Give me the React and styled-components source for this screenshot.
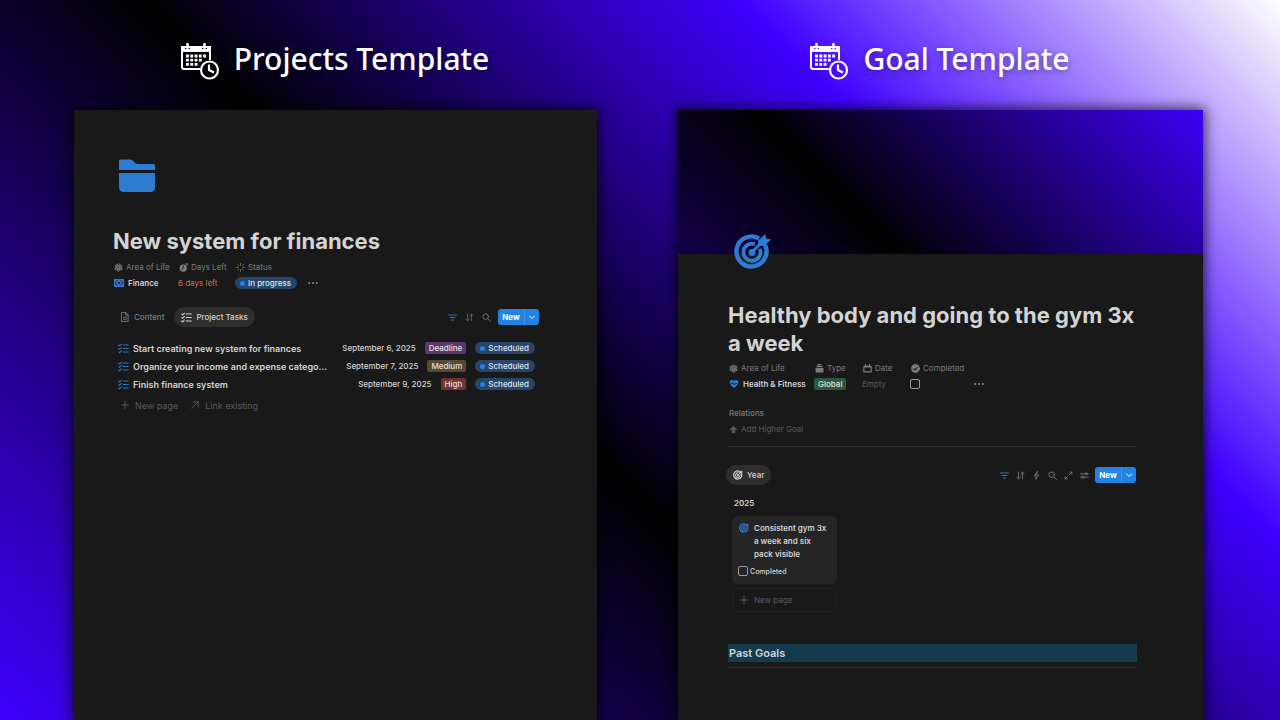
import React from 'react'
import styled, { createGlobalStyle } from 'styled-components'

const GlobalStyle = createGlobalStyle`
  * {
    box-sizing: border-box;
  }
  body {
    margin: 0;
    font-family: Inter, 'Liberation Sans', sans-serif;
    color: #d4d4d4;
  }
  h1, h2, h3, p, ul {
    margin: 0;
    padding: 0;
  }
  svg {
    display: block;
    flex: none;
  }
  button {
    border: 0;
    padding: 0;
    background: none;
    font: inherit;
    color: inherit;
    cursor: pointer;
  }
`

const Page = styled.main`
  min-height: 100vh;
  display: grid;
  grid-template-columns: 523fr 525fr;
  gap: 81px;
  padding: 0 77px 0 74px;
  background: linear-gradient(45deg, #4000ff 0%, #000 43%, #4000ff 73%, #fff 100%);
`

const Column = styled.section`
  min-width: 0;
  display: flex;
  flex-direction: column;
`

const Heading = styled.header`
  height: 110px;
  padding: 12px 2px 0 0;
  display: flex;
  align-items: center;
  justify-content: center;
  gap: 14px;
  color: #fff;
  h1 {
    font-family: 'Noto Sans', sans-serif;
    font-weight: 500;
    font-size: 30px;
    line-height: 40px;
    padding-bottom: 4px;
    white-space: nowrap;
    text-shadow: 0 2px 6px rgba(0, 0, 0, 0.4);
  }
`

const Panel = styled.article`
  flex: 1;
  background: #191919;
  box-shadow: 0 0 12px 2px rgba(0, 0, 0, 0.7);
`

const Cover = styled.div`
  height: 144px;
  background: linear-gradient(45deg, #14004a 0%, #000 33%, #3d00f5 100%);
`

const ProjectBody = styled.div`
  padding: 48px 57px 24px 39px;
`

const GoalBody = styled.div`
  padding: 0 66px 24px 50px;
`

const PageIcon = styled.div`
  padding-left: 6px;
  height: ${(props) => (props.$overlap ? '68px' : '69px')};
  margin-top: ${(props) => (props.$overlap ? '-21px' : '0')};
`

const Title = styled.h2`
  font-size: 22px;
  font-weight: 700;
  line-height: 28px;
`

const Properties = styled.div`
  display: grid;
  grid-template-columns: ${(props) => props.$columns};
  margin-top: ${(props) => props.$top};
`

const Label = styled.div`
  height: 16px;
  display: flex;
  align-items: center;
  gap: 3px;
  padding-left: 1px;
  font-size: 8px;
  color: #7d7d7d;
  white-space: nowrap;
`

const Value = styled.div`
  height: 16px;
  display: flex;
  align-items: center;
  gap: 4px;
  padding-left: ${(props) => (props.$strong ? '1px' : '0')};
  font-size: 8px;
  font-weight: ${(props) => (props.$strong ? 600 : 400)};
  color: ${(props) => props.$color || '#d4d4d4'};
  white-space: nowrap;
`

const MoreButton = styled.button`
  align-self: end;
  height: 16px;
  color: #9b9b9b;
`

const Pill = styled.span`
  height: 12px;
  padding: 0 6px 0 5px;
  border-radius: 6px;
  display: inline-flex;
  align-items: center;
  gap: 3px;
  background: #28456c;
  color: #dbe6f2;
  font-size: 8px;
  font-weight: 500;
  line-height: 12px;
  &::before {
    content: '';
    width: 5px;
    height: 5px;
    border-radius: 50%;
    background: #2383e2;
  }
`

const Tag = styled.span`
  padding: 0 4px;
  border-radius: 2px;
  background: ${(props) => props.$color};
  color: #e6e0dc;
  font-size: 8px;
  font-weight: 500;
  line-height: 12px;
`

const TabBar = styled.div`
  display: flex;
  align-items: center;
  gap: 3px;
  margin: ${(props) => props.$margin};
`

const Tab = styled.button`
  height: 20px;
  padding: 0 7px;
  border-radius: 10px;
  display: flex;
  align-items: center;
  gap: 4px;
  font-size: 8px;
  font-weight: 500;
  color: ${(props) => (props.$active ? '#d4d4d4' : '#7d7d7d')};
  background: ${(props) => (props.$active ? '#2f2e2c' : 'transparent')};
`

const Tools = styled.div`
  margin-left: auto;
  display: flex;
  align-items: center;
  gap: ${(props) => props.$gap};
`

const ToolButton = styled.button`
  width: 10px;
  display: flex;
  justify-content: center;
  color: ${(props) => (props.$active ? '#2777cb' : '#7d7d7d')};
`

const NewButton = styled.div`
  display: flex;
  height: 16px;
  border-radius: 3px;
  background: #2383e2;
  color: #fff;
  button {
    display: flex;
    align-items: center;
    justify-content: center;
    width: 14px;
  }
  button:first-child {
    width: 27px;
    font-size: 8px;
    font-weight: 700;
    border-right: 1px solid #3f93e6;
  }
`

const TaskList = styled.ul`
  list-style: none;
  margin: 12px 5px 0 5px;
`

const Task = styled.li`
  height: 18px;
  display: flex;
  align-items: center;
  gap: 9px;
  font-size: 8px;
  font-weight: 500;
  white-space: nowrap;
`

const TaskName = styled.span`
  flex: 1;
  display: flex;
  align-items: center;
  gap: 5px;
  font-size: 9px;
  font-weight: 600;
  min-width: 0;
`

const Links = styled.div`
  display: flex;
  gap: 12px;
  padding-left: 7px;
  margin-top: 4px;
`

const GhostButton = styled.button`
  height: 16px;
  display: flex;
  align-items: center;
  gap: ${(props) => (props.$small ? '3px' : '5px')};
  font-size: ${(props) => (props.$small ? '8px' : '9px')};
  color: #5a5a5a;
`

const Checkbox = styled.input`
  appearance: none;
  width: 10px;
  height: 10px;
  margin: 0;
  border: 1px solid #9b9b9b;
  border-radius: 2px;
`

const Relations = styled.section`
  margin-top: 13px;
  padding: 0 0 9px 1px;
  h3 {
    font-size: 8px;
    font-weight: 500;
    line-height: 16px;
    color: #7d7d7d;
  }
`

const Divider = styled.hr`
  margin: 0;
  border: 0;
  height: 1px;
  background: #2f2f2f;
`

const Board = styled.div`
  width: 109px;
  padding-left: 4px;
  margin-top: 10px;
  h3 {
    padding-left: 2px;
    font-size: 8px;
    font-weight: 600;
    line-height: 16px;
  }
`

const Card = styled.div`
  height: 68px;
  margin: 5px 0 4px;
  padding: 6px 6px 0;
  border-radius: 6px;
  background: #252525;
`

const CardTitle = styled.p`
  display: flex;
  gap: 5px;
  font-size: 8px;
  font-weight: 600;
  line-height: 13px;
  svg {
    margin: 1px 0 0 1px;
  }
`

const CardCheck = styled.label`
  height: 10px;
  margin-top: 5px;
  display: flex;
  align-items: center;
  gap: 2px;
  font-size: 7px;
  font-weight: 500;
`

const AddCard = styled.button`
  width: 100%;
  height: 24px;
  padding-left: 6px;
  border: 1px solid #222;
  border-radius: 6px;
  display: flex;
  align-items: center;
  gap: 5px;
  font-size: 8px;
  color: #5a5a5a;
`

const PastGoals = styled.h3`
  margin: 32px 0 5px;
  padding-left: 1px;
  font-size: 11px;
  font-weight: 600;
  line-height: 18px;
  background: #143a4e;
`

const Icon = ({ size = 10, box = 16, children, ...rest }) => (
  <svg
    width={size}
    height={size}
    viewBox={`0 0 ${box} ${box}`}
    fill="none"
    stroke="currentColor"
    strokeWidth="1.5"
    strokeLinecap="round"
    strokeLinejoin="round"
    aria-hidden="true"
    {...rest}
  >
    {children}
  </svg>
)

const CalendarClock = () => (
  <svg width="40" height="38" viewBox="0 0 40 38" fill="none" stroke="#fff" aria-hidden="true">
    <path d="M20 27H4a2 2 0 0 1-2-2V5h28v13" strokeWidth="2" />
    <path d="M1 4h4v3h5V4h12v3h5V4h4v6H1z" fill="#fff" stroke="none" />
    <path d="M7.500 2v4M24.500 2v4" strokeWidth="2.500" strokeLinecap="round" />
    <path d="M6 14h21M6 18.200h16.500M6 22.400h13" strokeWidth="2.800" strokeDasharray="2.900 1.400" />
    <circle cx="29.500" cy="28" r="8.500" strokeWidth="2.200" />
    <path d="M29 22.500V28l5 2.500" strokeWidth="2.200" />
  </svg>
)

const FolderIcon = () => (
  <svg width="36" height="35" viewBox="0 0 36 35" fill="#2e7cd1" aria-hidden="true">
    <path d="M0 12V3q0-1.500 1.500-1.500H11c4 0 4 4.500 8 4.500h15.500q1.500 0 1.500 1.500V12z" />
    <path d="M0 15h36v14q0 5-5 5H5q-5 0-5-5z" />
  </svg>
)

const TargetIcon = ({ size = 10, color = 'currentColor' }) => (
  <svg width={size} height={size} viewBox="0 0 37 37" fill="none" stroke={color} aria-hidden="true">
    <path d="M25 5.500A15 15 0 1 0 31 12" strokeWidth="4.400" />
    <path d="M21 11.300A8.500 8.500 0 1 0 25.800 16" strokeWidth="3.800" />
    <path d="M18 19l10-10" strokeWidth="2.800" />
    <circle cx="18" cy="19.500" r="3.600" fill={color} stroke="none" />
    <path d="M24 13V7.500L31.500 1l.5 4.500 5 1L30.500 13z" fill={color} stroke="none" />
  </svg>
)

const AtomIcon = () => (
  <Icon size={9}>
    <circle cx="8" cy="8" r="1.500" />
    <ellipse cx="8" cy="8" rx="7" ry="3" transform="rotate(30 8 8)" />
    <ellipse cx="8" cy="8" rx="7" ry="3" transform="rotate(90 8 8)" />
    <ellipse cx="8" cy="8" rx="7" ry="3" transform="rotate(150 8 8)" />
  </Icon>
)

const DaysIcon = () => (
  <Icon size={9}>
    <circle cx="7.500" cy="9" r="6.500" fill="currentColor" stroke="none" />
    <path d="M7.500 5.500V9.500L5.500 11" stroke="#191919" />
    <path d="M12 4l2.500-2.500M12 1.500h2.500V4" />
  </Icon>
)

const StatusIcon = () => (
  <Icon size={9}>
    <path d="M8 1v3M8 12v3M1 8h3M12 8h3M3 3l2 2M11 11l2 2M3 13l2-2M11 5l2-2" />
  </Icon>
)

const BanknoteIcon = () => (
  <svg width="10" height="8" viewBox="0 0 20 16" aria-hidden="true">
    <rect width="20" height="16" rx="1" fill="#2e7cd1" />
    <path d="M7 3Q3 5 3 8t4 5M13 3q4 2 4 5t-4 5" fill="none" stroke="#191919" strokeWidth="1.800" />
    <circle cx="10" cy="8" r="2.500" fill="#191919" />
  </svg>
)

const HeartPulseIcon = () => (
  <svg width="10" height="10" viewBox="0 0 20 20" fill="#2e7cd1" aria-hidden="true">
    <path d="M10 18C4 13 1 10 1 6.500 1 2 7 0 10 4c3-4 9-2 9 2.500C19 10 16 13 10 18z" />
    <path d="M1 10h5l2-3 3 5 2-3h3" fill="none" stroke="#191919" strokeWidth="1.600" />
  </svg>
)

const ChecklistIcon = ({ size = 11 }) => (
  <Icon size={size}>
    <path d="M1 3l1.300 1.300L5 1.500M1 8l1.300 1.300L5 6.500M1 13l1.300 1.300L5 11.500M7.500 3H15M7.500 8H15M7.500 13H15" />
  </Icon>
)

const DocIcon = () => (
  <Icon>
    <path d="M3 1h6l4 4v10H3zM9 1v4h4M5.500 8.500h5M5.500 11.500h5" />
  </Icon>
)

const FilterIcon = () => (
  <Icon size={9}>
    <path d="M1 3.500h14M3.500 8h9M6 12.500h4" strokeWidth="1.800" />
  </Icon>
)

const SortIcon = () => (
  <Icon size={9}>
    <path d="M4.500 2v12M1.500 11l3 3 3-3M11.500 14V2M8.500 5l3-3 3 3" />
  </Icon>
)

const BoltIcon = () => (
  <Icon size={9}>
    <path d="M9.500 1L4 9h3.500L6.500 15 12 7H8.500z" />
  </Icon>
)

const SearchIcon = () => (
  <Icon size={9}>
    <circle cx="6.500" cy="6.500" r="5" />
    <path d="M10.500 10.500L15 15" />
  </Icon>
)

const ExpandIcon = () => (
  <Icon size={9}>
    <path d="M9.500 6.500L14 2M10 2h4v4M6.500 9.500L2 14M6 14H2v-4" />
  </Icon>
)

const SettingsIcon = () => (
  <Icon size={9}>
    <path d="M1 5h8M13 5h2M1 11h2M7 11h8" />
    <circle cx="11" cy="5" r="2" />
    <circle cx="5" cy="11" r="2" />
  </Icon>
)

const PlusIcon = () => (
  <Icon>
    <path d="M8 2.500v11M2.500 8h11" />
  </Icon>
)

const ArrowIcon = () => (
  <Icon>
    <path d="M3 13L13 3M5 3h8v8" />
  </Icon>
)

const ArrowUpIcon = () => (
  <Icon size={9} fill="currentColor" strokeWidth="1">
    <path d="M8 2l6 6h-3.500v6h-5V8H2z" />
  </Icon>
)

const JarIcon = () => (
  <Icon size={9} fill="currentColor" stroke="none">
    <path d="M4.500 0h7v2h-7zM3 3h10v2.500H3zM1 6.500h14V14q0 1-1 1H2q-1 0-1-1z" />
  </Icon>
)

const DateIcon = () => (
  <Icon size={9}>
    <path d="M1.500 4h13v10h-13zM1.500 5h13M4.500 1v3M11.500 1v3" strokeWidth="2" />
  </Icon>
)

const CheckBadgeIcon = () => (
  <Icon size={9}>
    <circle cx="8" cy="8" r="7" fill="currentColor" />
    <path d="M5 8.500l2 2L11.500 6" stroke="#191919" strokeWidth="2" />
  </Icon>
)

const DotsIcon = () => (
  <Icon size={10} fill="currentColor" stroke="none">
    <circle cx="2" cy="8" r="1.500" />
    <circle cx="8" cy="8" r="1.500" />
    <circle cx="14" cy="8" r="1.500" />
  </Icon>
)

const ChevronIcon = () => (
  <Icon size={8}>
    <path d="M3 6l5 5 5-5" strokeWidth="2" />
  </Icon>
)

const tasks = [
  { name: 'Start creating new system for finances', date: 'September 6, 2025', tag: 'Deadline', color: '#583a70' },
  { name: 'Organize your income and expense catego…', date: 'September 7, 2025', tag: 'Medium', color: '#574a2f' },
  { name: 'Finish finance system', date: 'September 9, 2025', tag: 'High', color: '#703331' },
]

const NewMenu = () => (
  <NewButton>
    <button type="button">New</button>
    <button type="button" aria-label="More options">
      <ChevronIcon />
    </button>
  </NewButton>
)

const ProjectTemplate = () => (
  <Column>
    <Heading>
      <CalendarClock />
      <h1>Projects Template</h1>
    </Heading>
    <Panel>
      <ProjectBody>
        <PageIcon>
          <FolderIcon />
        </PageIcon>
        <Title>New system for finances</Title>
        <Properties $columns="65px 57px 73px auto" $top="4px">
          <div>
            <Label><AtomIcon />Area of Life</Label>
            <Value $strong><BanknoteIcon />Finance</Value>
          </div>
          <div>
            <Label><DaysIcon />Days Left</Label>
            <Value $color="#c77440">6 days left</Value>
          </div>
          <div>
            <Label><StatusIcon />Status</Label>
            <Value><Pill>In progress</Pill></Value>
          </div>
          <MoreButton type="button" aria-label="More properties"><DotsIcon /></MoreButton>
        </Properties>
        <TabBar $margin="16px 1px 0 0">
          <Tab type="button"><DocIcon />Content</Tab>
          <Tab type="button" $active><ChecklistIcon />Project Tasks</Tab>
          <Tools $gap="7px">
            <ToolButton type="button" aria-label="Filter" $active><FilterIcon /></ToolButton>
            <ToolButton type="button" aria-label="Sort" $active><SortIcon /></ToolButton>
            <ToolButton type="button" aria-label="Search"><SearchIcon /></ToolButton>
            <NewMenu />
          </Tools>
        </TabBar>
        <TaskList>
          {tasks.map((task) => (
            <Task key={task.name}>
              <TaskName>
                <ToolButton as="span" $active><ChecklistIcon /></ToolButton>
                {task.name}
              </TaskName>
              <span>{task.date}</span>
              <Tag $color={task.color}>{task.tag}</Tag>
              <Pill>Scheduled</Pill>
            </Task>
          ))}
        </TaskList>
        <Links>
          <GhostButton type="button"><PlusIcon />New page</GhostButton>
          <GhostButton type="button"><ArrowIcon />Link existing</GhostButton>
        </Links>
      </ProjectBody>
    </Panel>
  </Column>
)

const GoalTemplate = () => (
  <Column>
    <Heading>
      <CalendarClock />
      <h1>Goal Template</h1>
    </Heading>
    <Panel>
      <Cover />
      <GoalBody>
        <PageIcon $overlap>
          <TargetIcon size={37} color="#2e7cd1" />
        </PageIcon>
        <Title>Healthy body and going to the gym 3x a week</Title>
        <Properties $columns="86px 48px 48px 64px auto" $top="3px">
          <div>
            <Label><AtomIcon />Area of Life</Label>
            <Value $strong><HeartPulseIcon />Health &amp; Fitness</Value>
          </div>
          <div>
            <Label><JarIcon />Type</Label>
            <Value><Tag $color="#2b593f">Global</Tag></Value>
          </div>
          <div>
            <Label><DateIcon />Date</Label>
            <Value $color="#5a5a5a">Empty</Value>
          </div>
          <div>
            <Label as="label" htmlFor="goal-completed"><CheckBadgeIcon />Completed</Label>
            <Value><Checkbox type="checkbox" id="goal-completed" /></Value>
          </div>
          <MoreButton type="button" aria-label="More properties"><DotsIcon /></MoreButton>
        </Properties>
        <Relations>
          <h3>Relations</h3>
          <GhostButton type="button" $small><ArrowUpIcon />Add Higher Goal</GhostButton>
        </Relations>
        <Divider />
        <TabBar $margin="18px 1px 0 -2px">
          <Tab type="button" $active><TargetIcon />Year</Tab>
          <Tools $gap="6px">
            <ToolButton type="button" aria-label="Filter" $active><FilterIcon /></ToolButton>
            <ToolButton type="button" aria-label="Sort"><SortIcon /></ToolButton>
            <ToolButton type="button" aria-label="Automations"><BoltIcon /></ToolButton>
            <ToolButton type="button" aria-label="Search"><SearchIcon /></ToolButton>
            <ToolButton type="button" aria-label="Expand"><ExpandIcon /></ToolButton>
            <ToolButton type="button" aria-label="Settings"><SettingsIcon /></ToolButton>
            <NewMenu />
          </Tools>
        </TabBar>
        <Board>
          <h3>2025</h3>
          <Card>
            <CardTitle>
              <TargetIcon color="#2e7cd1" />
              Consistent gym 3x a week and six pack visible
            </CardTitle>
            <CardCheck>
              <Checkbox type="checkbox" />
              Completed
            </CardCheck>
          </Card>
          <AddCard type="button"><PlusIcon />New page</AddCard>
        </Board>
        <PastGoals>Past Goals</PastGoals>
        <Divider />
      </GoalBody>
    </Panel>
  </Column>
)

const App = () => (
  <>
    <GlobalStyle />
    <Page>
      <ProjectTemplate />
      <GoalTemplate />
    </Page>
  </>
)

export default App
